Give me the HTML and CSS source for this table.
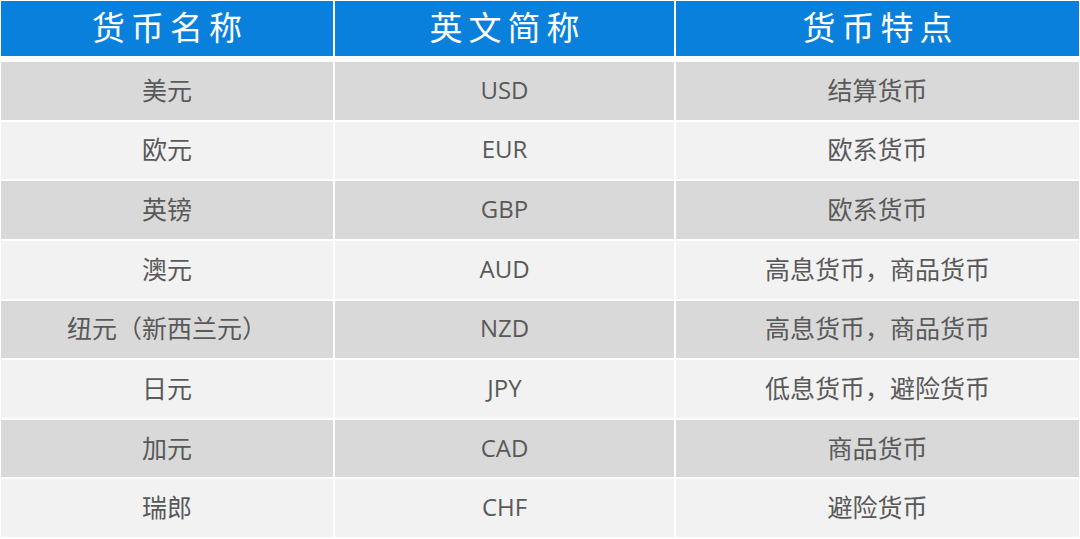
FILE: index.html
```html
<!DOCTYPE html>
<html lang="zh-CN">
<head>
<meta charset="utf-8">
<link rel="stylesheet" href="styles.css">
</head>
<body>
<div class="table">
  <div class="head">
    <div class="hcell">货币名称</div>
    <div class="hcell">英文简称</div>
    <div class="hcell">货币特点</div>
  </div>
  <div class="body">
    <div class="cell dark">美元</div><div class="cell dark latin">USD</div><div class="cell dark">结算货币</div>
    <div class="cell light">欧元</div><div class="cell light latin">EUR</div><div class="cell light">欧系货币</div>
    <div class="cell dark">英镑</div><div class="cell dark latin">GBP</div><div class="cell dark">欧系货币</div>
    <div class="cell light">澳元</div><div class="cell light latin">AUD</div><div class="cell light">高息货币，商品货币</div>
    <div class="cell dark">纽元（新西兰元）</div><div class="cell dark latin">NZD</div><div class="cell dark">高息货币，商品货币</div>
    <div class="cell light">日元</div><div class="cell light latin">JPY</div><div class="cell light">低息货币，避险货币</div>
    <div class="cell dark">加元</div><div class="cell dark latin">CAD</div><div class="cell dark">商品货币</div>
    <div class="cell light">瑞郎</div><div class="cell light latin">CHF</div><div class="cell light">避险货币</div>
  </div>
</div>
</body>
</html>
```
FILE: styles.css
```css
html, body {
  margin: 0;
  padding: 0;
  background: #ffffff;
}
body {
  width: 1080px;
  height: 539px;
  overflow: hidden;
  font-family: "Noto Sans CJK SC", "Noto Sans", sans-serif;
}
.table {
  display: flex;
  flex-direction: column;
  padding: 1px 1px 0 1px;
}
.head, .body {
  display: grid;
  grid-template-columns: 332px 339px 403px;
  column-gap: 2px;
}
.head {
  height: 55px;
  margin-bottom: 6px;
}
.hcell {
  background: #0a80dd;
  color: #ffffff;
  font-size: 33px;
  letter-spacing: 6px;
  padding-left: 6px;
  padding-bottom: 4px;
  box-sizing: border-box;
  display: flex;
  align-items: center;
  justify-content: center;
  line-height: 1;
}
.body {
  height: 475px;
  grid-template-rows: repeat(8, 1fr);
  row-gap: 2px;
}
.cell {
  display: flex;
  align-items: center;
  justify-content: center;
  color: #595959;
  font-size: 25px;
  line-height: 1;
  padding-bottom: 3px;
  box-sizing: border-box;
}
.latin {
  font-family: "Open Sans", "Noto Sans", sans-serif;
  font-size: 24px;
  padding-bottom: 2px;
}
.dark { background: #d9d9d9; }
.light { background: #f2f2f2; }
```
